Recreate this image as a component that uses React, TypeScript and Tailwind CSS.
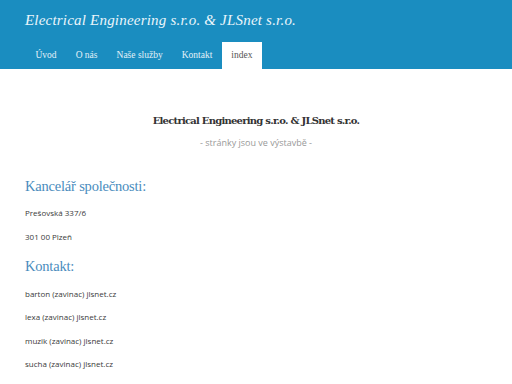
import React from "react";

const navItems = ["Úvod", "O nás", "Naše služby", "Kontakt", "index"];

const emails = [
  "barton (zavinac) jlsnet.cz",
  "lexa (zavinac) jlsnet.cz",
  "muzik (zavinac) jlsnet.cz",
  "sucha (zavinac) jlsnet.cz",
  "tel.: 371 430 317",
];

const App = () => {
  return (
    <div className="w-[512px] h-[384px] overflow-hidden bg-white">
      <header className="bg-[#1a8dc0] h-[69px] flex flex-col">
        <div className="pl-[25px] pt-[10px] h-[42px] text-[15px] leading-[20px] italic text-[#eaf5fb] font-['Liberation_Serif',serif] tracking-[0.2px]">
          Electrical Engineering s.r.o. &amp; JLSnet s.r.o.
        </div>
        <nav className="flex pl-[26px] h-[27px]">
          {navItems.map((item) => (
            <div
              key={item}
              className={
                item === "index"
                  ? "bg-white text-[#555] px-[9.5px] flex items-center text-[9.5px] font-['Liberation_Serif',serif]"
                  : "text-[#e3f1f8] px-[9.5px] flex items-center text-[9.5px] font-['Liberation_Serif',serif]"
              }
            >
              {item}
            </div>
          ))}
        </nav>
      </header>

      <main className="px-[25px]">
        <div className="flex flex-col items-center pt-[43px]">
          <h1 className="text-[10px] font-bold text-[#333] font-['DejaVu_Serif',serif] tracking-[-0.75px] leading-[18px]">
            Electrical Engineering s.r.o. &amp; JLSnet s.r.o.
          </h1>
          <p className="mt-[5px] text-[9px] text-[#999] font-['Open_Sans',sans-serif] leading-[16px]">
            - stránky jsou ve výstavbě -
          </p>
        </div>

        <h2 className="mt-[25px] text-[14.5px] text-[#4a8cbd] font-['Liberation_Serif',serif] tracking-[-0.2px] leading-[20px]">
          Kancelář společnosti:
        </h2>
        <p className="mt-[10px] text-[8px] text-[#3a3a3a] font-['Open_Sans',sans-serif] leading-[14px]">
          Prešovská 337/6
        </p>
        <p className="mt-[10px] text-[8px] text-[#3a3a3a] font-['Open_Sans',sans-serif] leading-[14px]">
          301 00 Plzeň
        </p>

        <h2 className="mt-[12px] text-[14.5px] text-[#4a8cbd] font-['Liberation_Serif',serif] tracking-[-0.2px] leading-[20px]">
          Kontakt:
        </h2>
        <div className="mt-[11px] flex flex-col gap-[9.3px]">
          {emails.map((e) => (
            <p
              key={e}
              className="text-[8px] text-[#3a3a3a] font-['Open_Sans',sans-serif] leading-[14px]"
            >
              {e}
            </p>
          ))}
        </div>
      </main>
    </div>
  );
};

export default App;
